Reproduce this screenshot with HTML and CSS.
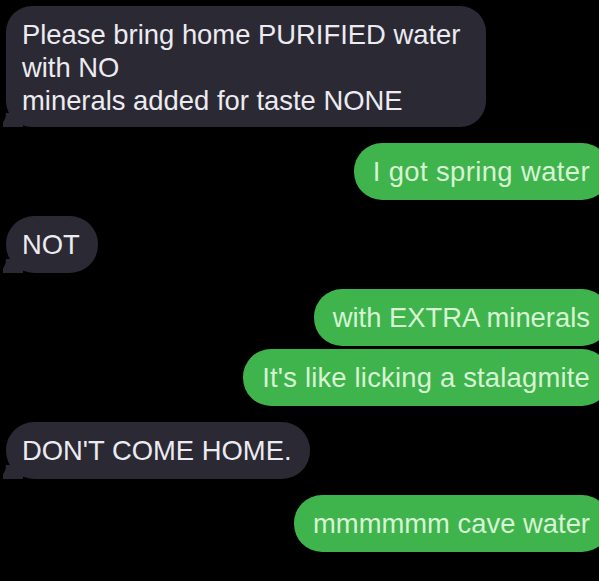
FILE: index.html
```html
<!DOCTYPE html>
<html>
<head>
<meta charset="utf-8">
<link rel="stylesheet" href="styles.css">
</head>
<body>
<div class="chat">
  <div class="msg in first">Please bring home PURIFIED water<br>with NO<br>minerals added for taste NONE</div>
  <div class="msg out gap wide">I got spring water</div>
  <div class="msg in gap">NOT</div>
  <div class="msg out gap">with EXTRA minerals</div>
  <div class="msg out tight loose">It's like licking a stalagmite</div>
  <div class="msg in gap">DON'T COME HOME.</div>
  <div class="msg out gap">mmmmmm cave water</div>
</div>
</body>
</html>
```
FILE: styles.css
```css
html {
  background: #000;
}
body {
  margin: 0;
  padding: 0;
  overflow: hidden;
}
.chat {
  display: flex;
  flex-direction: column;
  padding: 6px 0 0 6px;
  margin-right: -11px;
  font-family: "Liberation Sans", Arial, sans-serif;
  font-size: 27.4px;
  line-height: 33px;
}
.msg {
  position: relative;
  border-radius: 28px;
  padding: 12px 20px 12px 16px;
  white-space: nowrap;
}
.msg.in {
  align-self: flex-start;
  background: #2a2934;
  color: #ecebf0;
  padding-right: 18px;
}
.msg.in::before {
  content: "";
  position: absolute;
  left: -3px;
  bottom: 0;
  width: 20px;
  height: 14px;
  background: #2a2934;
}
.msg.in::after {
  content: "";
  position: absolute;
  left: -14px;
  bottom: 0;
  width: 14px;
  height: 16px;
  background: #000;
  border-bottom-right-radius: 12px 14px;
}
.msg.out {
  align-self: flex-end;
  background: #3fb34c;
  color: #d6f3d4;
  padding-left: 19px;
}
.wide {
  letter-spacing: 0.4px;
}
.loose {
  letter-spacing: 0.2px;
  padding-left: 20px;
}
.msg.first {
  padding: 12px 26px 10px 16px;
  border-radius: 26px;
}
.gap { margin-top: 16px; }
.tight { margin-top: 3px; }
```
